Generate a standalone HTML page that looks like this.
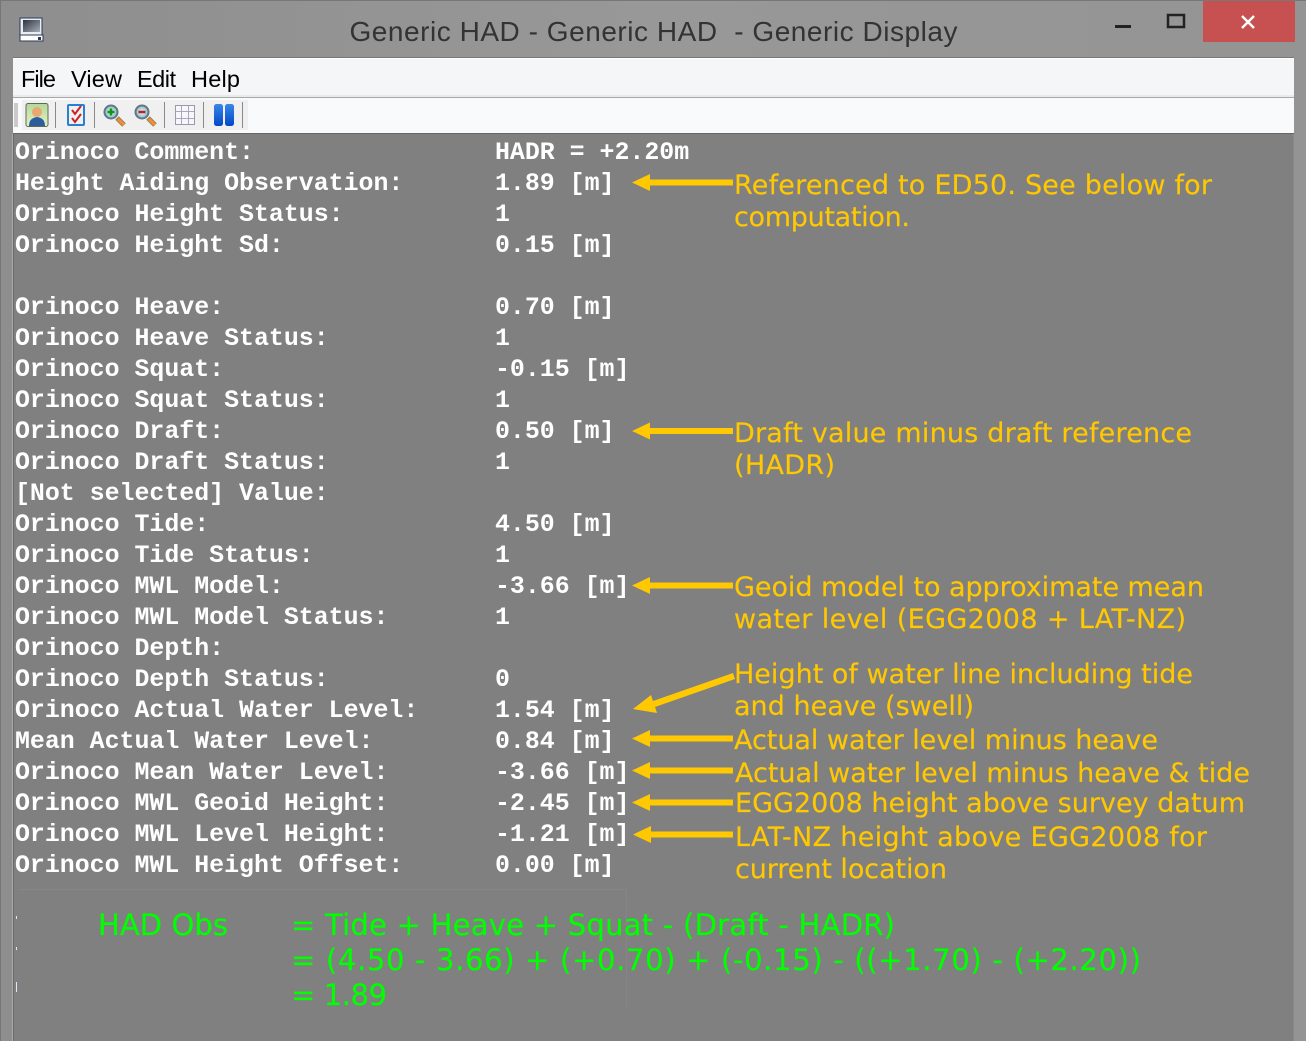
<!DOCTYPE html>
<html><head><meta charset="utf-8"><style>
html,body{margin:0;padding:0;width:1306px;height:1041px;overflow:hidden;background:#808080}
svg{display:block}
.m{font:bold 24.9px "Liberation Mono",monospace;fill:#fff;white-space:pre}
.a{font:27px "DejaVu Sans",sans-serif;fill:#ffc800;stroke:#ffc800;stroke-width:.15}
.g{font:29px "DejaVu Sans",sans-serif;fill:#0f0;white-space:pre;stroke:#0f0;stroke-width:.2}
.menu{font:23.500px "Liberation Sans",sans-serif;fill:#000}
</style></head><body>
<svg width="1306" height="1041" viewBox="0 0 1306 1041" xmlns="http://www.w3.org/2000/svg">
<defs>
<linearGradient id="tb" x1="0" y1="0" x2="1" y2="0"><stop offset="0" stop-color="#8e8e8e"/><stop offset=".5" stop-color="#989898"/><stop offset="1" stop-color="#949494"/></linearGradient>
<linearGradient id="sc" x1="0" y1="0" x2="1" y2="1"><stop offset="0" stop-color="#2c3340"/><stop offset="1" stop-color="#a8aeb8"/></linearGradient>
<linearGradient id="bl" x1="0" y1="0" x2="0" y2="1"><stop offset="0" stop-color="#3a86e8"/><stop offset="1" stop-color="#0048c8"/></linearGradient>
<linearGradient id="av" x1="0" y1="0" x2="0" y2="1"><stop offset="0" stop-color="#b4d89a"/><stop offset="1" stop-color="#e4f0c8"/></linearGradient>
<radialGradient id="gl"><stop offset="0" stop-color="#e8f4fa"/><stop offset="1" stop-color="#8cb8cc"/></radialGradient>
</defs>
<rect width="1306" height="1041" fill="url(#tb)"/>
<rect x="0" y="0" width="1306" height="1" fill="#777"/>
<rect x="0" y="0" width="1" height="1041" fill="#777"/>

<!-- window icon -->
<rect x="20" y="18" width="22" height="20" fill="#e8eef2" stroke="#2c3a58" stroke-width="1"/>
<rect x="23" y="20" width="17" height="12" fill="url(#sc)"/>
<rect x="20" y="35" width="23" height="6" fill="#fff" stroke="#2c3a58" stroke-width="1"/>
<rect x="38" y="37" width="3" height="3" fill="#2c3a58"/>

<text x="349.500" y="41" font-family="Liberation Sans,sans-serif" font-size="28" fill="#333" textLength="608" xml:space="preserve">Generic HAD - Generic HAD  - Generic Display</text>

<!-- window controls -->
<rect x="1115" y="25" width="16" height="3" fill="#222"/>
<rect x="1168" y="15" width="16" height="12" fill="none" stroke="#222" stroke-width="2.500"/>
<rect x="1203" y="1" width="92" height="41" fill="#c75050"/>
<path d="M1242 16 L1254 28 M1254 16 L1242 28" stroke="#fff" stroke-width="2.400" fill="none"/>

<!-- menu -->
<rect x="13" y="58" width="1281" height="39" fill="#f5f6f8"/>
<rect x="13" y="57" width="1281" height="1" fill="#777"/>
<rect x="13" y="58" width="1281" height="1" fill="#fff"/>
<rect x="13" y="95" width="1281" height="2" fill="#eaeaea"/>
<rect x="13" y="97" width="1281" height="1" fill="#a8a8a8"/>
<text class="menu" x="21" y="87" textLength="35">File</text>
<text class="menu" x="71" y="87" textLength="51">View</text>
<text class="menu" x="137" y="87" textLength="39">Edit</text>
<text class="menu" x="191" y="87" textLength="49">Help</text>

<!-- toolbar -->
<rect x="13" y="98" width="1281" height="35" fill="#f9fafb"/>
<rect x="22" y="100" width="226" height="30" fill="#f0f0f0"/>
<path d="M14 104h4M14 106h4M14 108h4M14 110h4M14 112h4M14 114h4M14 116h4M14 118h4M14 120h4M14 122h4M14 124h4M14 126h4" stroke="#9a9a9a" stroke-width="1"/>
<!-- avatar -->
<rect x="26" y="103.500" width="22" height="23" rx="2" fill="url(#av)" stroke="#5c6a58"/>
<circle cx="37" cy="112" r="5" fill="#e8a870"/>
<path d="M29 126 Q29 118 37 117 Q45 118 45 126 Z" fill="#2c5c9c"/>
<path d="M55.500 102V128M94.500 102V128M164.500 102V128M203.500 102V128M242.500 102V128" stroke="#8a8a8a" stroke-width="1"/>
<!-- checklist -->
<rect x="68" y="105" width="16" height="20" rx="1" fill="#eef0f4" stroke="#2a80d0" stroke-width="2"/>
<path d="M72 110 L75 114 L81 106 M72 118 L75 122 L81 114" fill="none" stroke="#d02020" stroke-width="2"/>
<!-- zoom in -->
<path d="M117 118 L124 125" stroke="#a08060" stroke-width="5"/>
<path d="M118 119 L124 125" stroke="#f09030" stroke-width="3"/>
<circle cx="111" cy="112" r="6.500" fill="url(#gl)" stroke="#607880" stroke-width="2"/>
<path d="M111 108.500V115.500M107.500 112H114.500" stroke="#0a9a0a" stroke-width="2.500"/>
<!-- zoom out -->
<path d="M148 118 L155 125" stroke="#a08060" stroke-width="5"/>
<path d="M149 119 L155 125" stroke="#f09030" stroke-width="3"/>
<circle cx="142" cy="112" r="6.500" fill="url(#gl)" stroke="#607880" stroke-width="2"/>
<path d="M138.500 112H145.500" stroke="#c02020" stroke-width="2.500"/>
<!-- grid -->
<rect x="175.500" y="105.500" width="19" height="19" fill="#f6f6fc" stroke="#9a9aa8"/>
<path d="M181.500 106V124M188.500 106V124M176 111.500H194M176 118.500H194" stroke="#a8a8b8" stroke-width="1"/>
<!-- bars -->
<rect x="214" y="104" width="9" height="22" rx="2.500" fill="url(#bl)"/>
<rect x="225" y="104" width="9" height="22" rx="2.500" fill="url(#bl)"/>

<!-- content -->
<rect x="13" y="133" width="1281" height="1" fill="#666"/>
<rect x="14" y="134" width="1279" height="907" fill="#808080"/>
<rect x="12" y="134" width="1" height="907" fill="#aaa"/>
<rect x="13" y="134" width="1" height="907" fill="#6a6a6a"/>
<rect x="1293" y="134" width="1" height="907" fill="#8a8a8a"/>

<!-- faint artefact box -->
<path d="M18.500 889.500H626.500V1010" fill="none" stroke="#868686" stroke-width="1"/>

<text class="m" x="15" y="159">Orinoco Comment:</text>
<text class="m" x="15" y="190">Height Aiding Observation:</text>
<text class="m" x="15" y="221">Orinoco Height Status:</text>
<text class="m" x="15" y="252">Orinoco Height Sd:</text>
<text class="m" x="15" y="314">Orinoco Heave:</text>
<text class="m" x="15" y="345">Orinoco Heave Status:</text>
<text class="m" x="15" y="376">Orinoco Squat:</text>
<text class="m" x="15" y="407">Orinoco Squat Status:</text>
<text class="m" x="15" y="438">Orinoco Draft:</text>
<text class="m" x="15" y="469">Orinoco Draft Status:</text>
<text class="m" x="15" y="500">[Not selected] Value:</text>
<text class="m" x="15" y="531">Orinoco Tide:</text>
<text class="m" x="15" y="562">Orinoco Tide Status:</text>
<text class="m" x="15" y="593">Orinoco MWL Model:</text>
<text class="m" x="15" y="624">Orinoco MWL Model Status:</text>
<text class="m" x="15" y="655">Orinoco Depth:</text>
<text class="m" x="15" y="686">Orinoco Depth Status:</text>
<text class="m" x="15" y="717">Orinoco Actual Water Level:</text>
<text class="m" x="15" y="748">Mean Actual Water Level:</text>
<text class="m" x="15" y="779">Orinoco Mean Water Level:</text>
<text class="m" x="15" y="810">Orinoco MWL Geoid Height:</text>
<text class="m" x="15" y="841">Orinoco MWL Level Height:</text>
<text class="m" x="15" y="872">Orinoco MWL Height Offset:</text>

<text class="m" x="495" y="159">HADR = +2.20m</text>
<text class="m" x="495" y="190">1.89 [m]</text>
<text class="m" x="495" y="221">1</text>
<text class="m" x="495" y="252">0.15 [m]</text>
<text class="m" x="495" y="314">0.70 [m]</text>
<text class="m" x="495" y="345">1</text>
<text class="m" x="495" y="376">-0.15 [m]</text>
<text class="m" x="495" y="407">1</text>
<text class="m" x="495" y="438">0.50 [m]</text>
<text class="m" x="495" y="469">1</text>
<text class="m" x="495" y="531">4.50 [m]</text>
<text class="m" x="495" y="562">1</text>
<text class="m" x="495" y="593">-3.66 [m]</text>
<text class="m" x="495" y="624">1</text>
<text class="m" x="495" y="686">0</text>
<text class="m" x="495" y="717">1.54 [m]</text>
<text class="m" x="495" y="748">0.84 [m]</text>
<text class="m" x="495" y="779">-3.66 [m]</text>
<text class="m" x="495" y="810">-2.45 [m]</text>
<text class="m" x="495" y="841">-1.21 [m]</text>
<text class="m" x="495" y="872">0.00 [m]</text>

<!-- arrows -->
<g fill="#ffc800">
<path d="M632 182.500 L650 174 V179.500 H733 V185.500 H650 V191 Z"/>
<path d="M632 431 L650 422.500 V428 H733 V434 H650 V439.500 Z"/>
<path d="M632 585.500 L650 577 V582.500 H733 V588.500 H650 V594 Z"/>
<path d="M633 709 L651 695 L653 701 L733 673 L735 679 L655 707 L657 713 Z"/>
<path d="M632 738.500 L650 730 V735.500 H733 V741.500 H650 V747 Z"/>
<path d="M632 770.500 L650 762 V767.500 H733 V773.500 H650 V779 Z"/>
<path d="M632 802.500 L650 794 V799.500 H733 V805.500 H650 V811 Z"/>
<path d="M633 834.500 L651 826 V831.500 H733 V837.500 H651 V843 Z"/>
</g>

<!-- annotations -->
<text class="a" x="734" y="194" textLength="478">Referenced to ED50. See below for</text>
<text class="a" x="734" y="226" textLength="176">computation.</text>
<text class="a" x="734" y="442" textLength="458">Draft value minus draft reference</text>
<text class="a" x="734" y="474" textLength="101">(HADR)</text>
<text class="a" x="734" y="596" textLength="470">Geoid model to approximate mean</text>
<text class="a" x="734" y="628" textLength="452">water level (EGG2008 + LAT-NZ)</text>
<text class="a" x="734" y="683" textLength="459">Height of water line including tide</text>
<text class="a" x="734" y="715" textLength="240">and heave (swell)</text>
<text class="a" x="734" y="749" textLength="424">Actual water level minus heave</text>
<text class="a" x="735" y="782" textLength="515">Actual water level minus heave &amp; tide</text>
<text class="a" x="735" y="812" textLength="510">EGG2008 height above survey datum</text>
<text class="a" x="735" y="846" textLength="472">LAT-NZ height above EGG2008 for</text>
<text class="a" x="735" y="878" textLength="212">current location</text>

<!-- specks -->
<path d="M16.500 916v3M16.500 947v3" stroke="#dfe8f5" stroke-width="1"/>
<path d="M16.500 982v10" stroke="#dfe8f5" stroke-width="1"/>

<!-- formula -->
<text class="g" x="98" y="935" textLength="130">HAD Obs</text>
<text class="g" x="291" y="935" textLength="604">= Tide + Heave + Squat - (Draft - HADR)</text>
<text class="g" x="291" y="970" textLength="850">= (4.50 - 3.66) + (+0.70) + (-0.15) - ((+1.70) - (+2.20))</text>
<text class="g" x="291" y="1005" textLength="96">= 1.89</text>
</svg>
</body></html>
